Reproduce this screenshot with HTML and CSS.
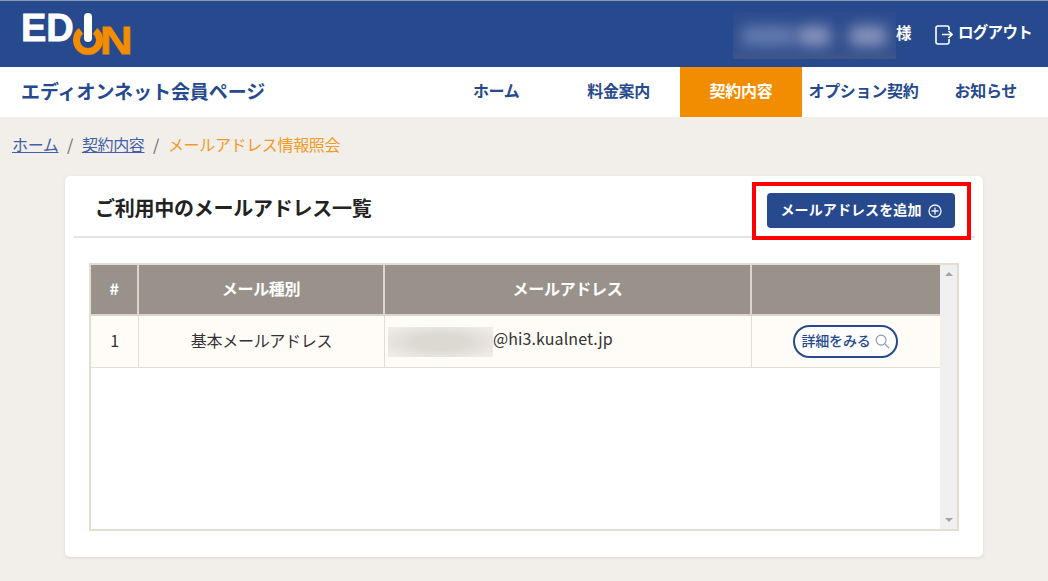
FILE: index.html
```html
<!DOCTYPE html>
<html lang="ja">
<head>
<meta charset="utf-8">
<title>メールアドレス情報照会</title>
<link rel="stylesheet" href="styles.css">
</head>
<body>
<header class="topbar">
  <div class="logo">
    <span class="logo-ed">ED</span>
    <svg class="logo-power" viewBox="0 0 32 44" width="32" height="44" aria-hidden="true">
      <path d="M8 17.900 A11.500 11.500 0 1 0 22 17.900" fill="none" stroke="#f28c00" stroke-width="7"/>
      <rect x="11" y="0" width="8" height="29" rx="4" fill="#fff"/>
    </svg>
    <span class="logo-n">N</span>
  </div>
  <div class="account">
    <div class="name-mask"><span class="blot blot-a"></span><span class="blot blot-b"></span><span class="blot blot-c"></span></div>
    <span class="sama">様</span>
    <a class="logout">
      <svg viewBox="0 0 18 20" width="18" height="20" aria-hidden="true">
        <path d="M14 5V3a2 2 0 0 0-2-2H3a2 2 0 0 0-2 2v14a2 2 0 0 0 2 2h9a2 2 0 0 0 2-2v-3" fill="none" stroke="#fff" stroke-width="1.600"/>
        <path d="M7 9.500h10M13.500 6 17 9.500 13.500 13" fill="none" stroke="#fff" stroke-width="1.600"/>
      </svg>
      <span>ログアウト</span>
    </a>
  </div>
</header>
<nav class="navbar">
  <div class="site-title">エディオンネット会員ページ</div>
  <ul class="menu">
    <li>ホーム</li>
    <li>料金案内</li>
    <li class="active">契約内容</li>
    <li>オプション契約</li>
    <li>お知らせ</li>
  </ul>
</nav>
<div class="crumbs">
  <a>ホーム</a><span class="sep">/</span><a>契約内容</a><span class="sep">/</span><span class="current">メールアドレス情報照会</span>
</div>
<main class="card">
  <div class="card-head">
    <h1>ご利用中のメールアドレス一覧</h1>
    <div class="add-wrap">
      <button class="add-btn"><span>メールアドレスを追加</span>
        <svg viewBox="0 0 14 14" width="14" height="14" aria-hidden="true">
          <circle cx="7" cy="7" r="6" fill="none" stroke="#eef1f7" stroke-width="1.300"/>
          <path d="M7 3.500v7M3.500 7h7" stroke="#eef1f7" stroke-width="1.300"/>
        </svg>
      </button>
    </div>
  </div>
  <div class="table-box">
    <div class="table-area">
      <table>
        <thead>
          <tr><th class="c1">#</th><th class="c2">メール種別</th><th class="c3">メールアドレス</th><th class="c4"></th></tr>
        </thead>
        <tbody>
          <tr>
            <td>1</td>
            <td>基本メールアドレス</td>
            <td class="addr"><span class="addr-mask"></span>@hi3.kualnet.jp</td>
            <td class="act">
              <a class="detail"><span>詳細をみる</span>
                <svg viewBox="0 0 16 16" width="15" height="15" aria-hidden="true">
                  <circle cx="6.500" cy="6.500" r="5.300" fill="none" stroke="#8d96ad" stroke-width="1.200"/>
                  <path d="M10.500 10.500 15 15" stroke="#8d96ad" stroke-width="1.300"/>
                </svg>
              </a>
            </td>
          </tr>
        </tbody>
      </table>
    </div>
    <div class="scrollbar"><span class="arrow-up"></span><span class="arrow-down"></span></div>
  </div>
</main>
</body>
</html>
```
FILE: styles.css
```css
*, *::after { box-sizing: border-box; }
html, body { margin: 0; padding: 0; }
body {
  width: 1048px;
  height: 581px;
  overflow: hidden;
  background: #f2efeb;
  font-family: "Noto Sans CJK JP", "Noto Sans", sans-serif;
  color: #333;
}
.topbar {
  height: 67px;
  background: #27498d;
  border-top: 1px solid #8a9abb;
  display: flex;
  justify-content: space-between;
  padding: 0 16px 0 23px;
}
.logo { display: flex; align-items: flex-start; width: 112px; }
.logo-ed {
  font-family: "Liberation Sans", sans-serif;
  font-weight: 700;
  font-size: 38px;
  line-height: 28px;
  margin: 13px 0 0 -2px;
  color: #fff;
  -webkit-text-stroke: 0.8px #fff;
  width: 52px;
  flex: none;
}
.logo-power { margin-top: 12px; flex: none; }
.logo-n {
  font-family: "Liberation Sans", sans-serif;
  font-weight: 700;
  font-size: 38px;
  line-height: 28px;
  margin-top: 26px;
  margin-left: -5px;
  color: #f28c00;
  -webkit-text-stroke: 0.8px #f28c00;
  transform: scaleX(1.200);
  transform-origin: left center;
}
.account { display: flex; align-items: flex-start; color: #fff; font-weight: 700; }
.name-mask {
  width: 163px;
  height: 47px;
  margin-top: 11px;
  position: relative;
  overflow: hidden;
  background: linear-gradient(#2c4c8e, #33508f 80%, #3f5688);
}
.blot { position: absolute; top: 14px; height: 20px; background: #8794bb; filter: blur(7px); border-radius: 8px; }
.blot-a { left: 8px; width: 55px; background: #647bae; }
.blot-b { left: 64px; width: 34px; }
.blot-c { left: 116px; width: 38px; }
.sama { font-size: 15.500px; line-height: 22px; margin-top: 20px; width: 39px; }
.logout { display: flex; align-items: flex-start; }
.logout svg { margin-top: 24px; margin-right: 5px; }
.logout span { font-size: 15.500px; line-height: 22px; margin-top: 19px; letter-spacing: -0.700px; }
.navbar {
  height: 50px;
  background: #fff;
  display: flex;
  justify-content: space-between;
  padding: 0 1px 0 21px;
}
.site-title {
  font-size: 19px;
  line-height: 48px;
  font-weight: 700;
  color: #27498d;
  letter-spacing: -0.050px;
}
.menu { list-style: none; margin: 0; padding: 0; display: flex; }
.menu li {
  width: 122.400px;
  text-align: center;
  font-size: 16px;
  line-height: 47px;
  font-weight: 700;
  color: #27498d;
  letter-spacing: -0.300px;
}
.menu li.active { background: #f28c00; color: #fff; }
.crumbs {
  padding: 15px 0 0 12px;
  height: 59px;
  font-size: 16px;
  line-height: 24px;
  letter-spacing: -0.350px;
  color: #666;
}
.crumbs a { color: #3f5fa8; text-decoration: underline; }
.crumbs .sep { margin: 0 9px 0 8.500px; }
.crumbs .current { color: #f39a26; }
.card {
  width: 918px;
  height: 381px;
  margin-left: 65px;
  background: #fff;
  border-radius: 5px;
  box-shadow: 0 1px 3px rgba(120, 110, 95, 0.18);
  padding: 0 8px 0 9px;
}
.card-head {
  height: 62px;
  border-bottom: 2px solid #e1e5ea;
  display: flex;
  justify-content: space-between;
  padding: 0 20px 0 22px;
  position: relative;
}
h1 {
  margin: 0 0 0 -1px;
  font-size: 20px;
  line-height: 64px;
  font-weight: 700;
  color: #222;
  letter-spacing: -0.250px;
}
.add-wrap { padding-top: 17px; }
.add-wrap::after {
  content: "";
  position: absolute;
  left: 678px;
  top: 6px;
  width: 219px;
  height: 58px;
  border: 4px solid #f00;
}
.add-btn {
  width: 188px;
  height: 35px;
  border: 0;
  border-radius: 4px;
  background: #27498d;
  color: #fff;
  font-family: inherit;
  font-weight: 700;
  font-size: 14px;
  padding: 0;
  display: flex;
  align-items: center;
  justify-content: center;
  gap: 6px;
}
.add-btn span { letter-spacing: 0.100px; padding-bottom: 4px; }
.table-box {
  width: 870px;
  height: 268px;
  margin: 25px 0 0 15px;
  border: 2px solid #e3ddd2;
  display: flex;
}
.table-area { width: 849px; height: 100%; background: #fff; }
table { border-collapse: separate; border-spacing: 0; table-layout: fixed; width: 849px; }
.c1 { width: 48px; }
.c2 { width: 246px; }
.c3 { width: 367px; }
.c4 { width: 188px; }
th {
  height: 51px;
  background: #98928b;
  color: #fff;
  font-size: 16px;
  font-weight: 700;
  border: 2px solid #dcd6ca;
  border-width: 0 2px 2px 0;
  padding: 0 0 4px;
  letter-spacing: -0.300px;
}
th:last-child { border-right: 0; }
td {
  height: 52px;
  background: #fffcf8;
  font-size: 16px;
  text-align: center;
  border: 1px solid #e4ddd3;
  border-width: 0 1px 1px 0;
  padding: 0 0 4px;
  letter-spacing: -0.300px;
}
td:last-child { border-right: 0; }
td.addr { text-align: left; padding: 0 0 3px 3px; letter-spacing: 0.100px; }
td.act { padding: 0 1px 0 0; }
.addr-mask {
  display: inline-block;
  width: 105px;
  height: 30px;
  margin-top: 3px;
  vertical-align: middle;
  background: radial-gradient(ellipse at 50% 50%, #dcd9d3 35%, #efece7 90%);
}
.detail {
  display: inline-flex;
  align-items: center;
  justify-content: center;
  gap: 4px;
  width: 105px;
  height: 33px;
  border: 2px solid #27498d;
  border-radius: 17px;
  background: #fff;
  color: #27498d;
  font-size: 14px;
  font-weight: 500;
  vertical-align: middle;
}
.detail span { padding-bottom: 3px; letter-spacing: -0.200px; }
.scrollbar {
  width: 17px;
  background: #f0f0f0;
  display: flex;
  flex-direction: column;
  justify-content: space-between;
  align-items: center;
  padding: 7px 0;
}
.arrow-up, .arrow-down { width: 0; height: 0; border-left: 4px solid transparent; border-right: 4px solid transparent; }
.arrow-up { border-bottom: 4px solid #a3a3a3; }
.arrow-down { border-top: 4px solid #a3a3a3; }
```
